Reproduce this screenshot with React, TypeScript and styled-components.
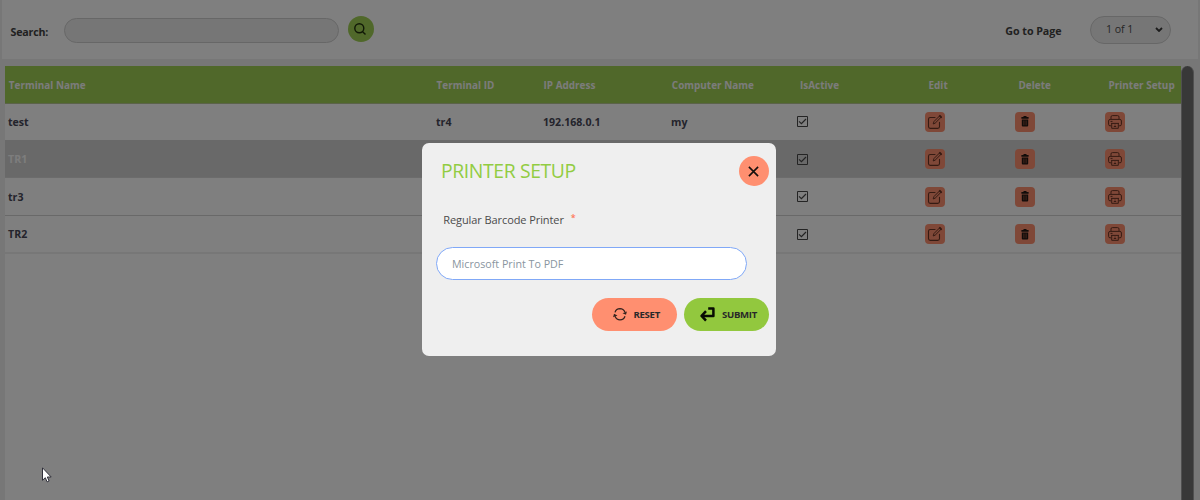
import React from "react";
import styled, { createGlobalStyle } from "styled-components";

const GlobalStyle = createGlobalStyle`
  * { box-sizing: border-box; }
  body {
    margin: 0;
    overflow: hidden;
    font-family: "Open Sans", "Noto Sans", sans-serif;
  }
  button, input, select { font-family: inherit; }
`;

const Page = styled.div`
  height: 500px;
  display: flex;
  flex-direction: column;
  background: #eeeeee;
  overflow: hidden;
`;

const Toolbar = styled.header`
  height: 59px;
  flex: none;
  margin: 0 2px;
  padding: 0 27px 0 9px;
  display: flex;
  align-items: flex-start;
  background: #ffffff;
`;

const ToolLabel = styled.label<{ $top: number; $push?: boolean }>`
  margin-top: ${(p) => p.$top}px;
  margin-left: ${(p) => (p.$push ? "auto" : "-0.5px")};
  font-size: 10.7px;
  line-height: 16px;
  font-weight: 700;
  letter-spacing: ${(p) => (p.$push ? "-0.05px" : "-0.2px")};
  color: #434343;
  white-space: nowrap;
`;

const SearchInput = styled.input`
  width: 275px;
  height: 25px;
  margin: 18px 0 0 15.7px;
  padding: 0 14px;
  border: 1px solid #cfcfcf;
  border-radius: 13px;
  background: #ececec;
  outline: none;
`;

const SearchButton = styled.button`
  width: 26px;
  height: 26px;
  margin: 16px 0 0 9px;
  padding: 0 1px 0 0;
  display: grid;
  place-items: center;
  border: 0;
  border-radius: 50%;
  background: #a0d054;
`;

const PageSelect = styled.div`
  width: 81px;
  height: 28px;
  margin: 16px 0 0 28.5px;
  padding: 0 7px 2px 15px;
  display: flex;
  align-items: center;
  justify-content: space-between;
  border: 1px solid #cfcfcf;
  border-radius: 14px;
  background: #ececec;
  color: #4c4c4c;
  font-size: 10.6px;
  letter-spacing: -0.05px;
`;

const Content = styled.main`
  flex: 1;
  display: flex;
  margin: 7px 6px 0 5px;
`;

const Table = styled.div`
  width: 1176px;
  background: #ffffff;
`;

const Row = styled.div<{ $kind?: "head" | "active" | "last" }>`
  height: ${(p) => (p.$kind === "head" ? 37.5 : p.$kind === "last" ? 38.5 : 37.45)}px;
  display: grid;
  grid-template-columns: 428px 107px 128px 129px 128px 90px 90px 76px;
  align-items: center;
  border-bottom: ${(p) => (p.$kind === "last" ? 2 : 1)}px solid
    ${(p) => (p.$kind === "head" ? "#b6c792" : p.$kind === "active" ? "#d8d8d8" : p.$kind === "last" ? "#eeeeee" : "#d2d2d2")};
  background: ${(p) => (p.$kind === "head" ? "#a0d054" : p.$kind === "active" ? "#d2d2d2" : "#ffffff")};
  color: ${(p) => (p.$kind === "head" ? "#f8f8f8" : p.$kind === "active" ? "#fbfbfb" : "#484858")};
`;

const HeadCell = styled.div<{ $indent?: number }>`
  padding: 1px 0 0 ${(p) => p.$indent ?? 3.8}px;
  font-size: 9.9px;
  font-weight: 700;
  letter-spacing: 0.04px;
  white-space: nowrap;
`;

const Cell = styled.div<{ $indent?: number }>`
  padding-left: ${(p) => p.$indent ?? 3}px;
  font-size: 10.6px;
  font-weight: 700;
  white-space: nowrap;
  display: flex;
`;

const RowButton = styled.button`
  width: 20px;
  height: 20px;
  padding: 0;
  display: grid;
  place-items: center;
  border: 0;
  border-radius: 4px;
  background: #ff9070;
`;

const Scrollbar = styled.div`
  width: 13px;
  border-radius: 7px 7px 0 0;
  background: #707070;
  border: solid #a0a0a0;
  border-width: 0 1px;
`;

const Backdrop = styled.div`
  position: absolute;
  inset: 0 0 auto 0;
  height: 500px;
  padding-top: 143px;
  padding-right: 2px;
  display: flex;
  justify-content: center;
  align-items: flex-start;
  background: rgba(0, 0, 0, 0.5);
`;

const Dialog = styled.section`
  width: 354px;
  height: 213px;
  padding: 13px 7px 25px 14px;
  display: flex;
  flex-direction: column;
  border-radius: 7px;
  background: #efefef;
`;

const DialogHead = styled.div`
  display: flex;
  justify-content: space-between;
  padding-left: 5px;
  height: 30px;
`;

const Title = styled.h1`
  margin: 0;
  font-size: 19.4px;
  line-height: 29px;
  font-weight: 400;
  letter-spacing: -0.4px;
  color: #92cc42;
`;

const CloseButton = styled.button`
  width: 30px;
  height: 30px;
  padding: 0 1px 0 0;
  display: grid;
  place-items: center;
  border: 0;
  border-radius: 50%;
  background: #ff8f70;
`;

const FieldLabel = styled.label`
  margin: 26px 0 0 7.2px;
  font-size: 11px;
  line-height: 16px;
  letter-spacing: -0.08px;
  color: #4b4b4b;
`;

const Required = styled.span`
  margin-left: 4px;
  font-size: 9px;
  font-weight: 600;
  line-height: 1;
  vertical-align: 3px;
  color: #ff7657;
`;

const PrinterInput = styled.input`
  width: 311px;
  height: 33px;
  margin-top: 19px;
  padding: 0 15px;
  border: 1px solid #80a8f7;
  border-radius: 17px;
  background: #ffffff;
  color: #8995a0;
  font-size: 10.7px;
  outline: none;
`;

const Actions = styled.div`
  margin-top: 18px;
  display: flex;
  justify-content: flex-end;
  gap: 7px;
`;

const ActionButton = styled.button<{ $color: string; $gap: number; $left: number }>`
  width: 85px;
  height: 33px;
  padding: 0 0 1px ${(p) => p.$left}px;
  display: flex;
  align-items: center;
  gap: ${(p) => p.$gap}px;
  border: 0;
  border-radius: 17px;
  background: ${(p) => p.$color};
  color: #292929;
  font-size: 9.6px;
  font-weight: 700;
  letter-spacing: -0.3px;
`;

const Cursor = styled.svg`
  position: absolute;
  left: 42px;
  top: 467px;
`;

const SearchIcon = () => (
  <svg width="12" height="12" viewBox="0 0 12 12" fill="none" stroke="#20300c" strokeWidth="1.4">
    <circle cx="5.3" cy="5.3" r="4.5" />
    <path d="M8.4 8.4 11.5 11.5" />
  </svg>
);

const CheckIcon = () => (
  <svg width="11" height="11" viewBox="0 0 11 11" fill="none" stroke="#484848">
    <path d="M.5.5h10v10H.5z" />
    <path d="M2 5.4 4.4 7.7 9 3" strokeWidth="1.2" />
  </svg>
);

const EditIcon = () => (
  <svg width="16" height="16" viewBox="0 0 16 16" fill="none" stroke="#6a3626" strokeLinejoin="round" strokeLinecap="round">
    <path d="M8 3.5H3.3Q1.5 3.5 1.5 5.3v7.3q0 1.8 1.8 1.8h7.4q1.8 0 1.8-1.8V8.2" strokeWidth="1.1" />
    <path d="m6.3 9.6.7-2.1 5.6-5.6 1.4 1.4-5.6 5.6z" strokeWidth="1" />
    <path d="m12.9 1.9 1.2 1.2" strokeWidth="2" />
  </svg>
);

const TrashIcon = () => (
  <svg width="8" height="11" viewBox="0 0 8 11">
    <path d="M2.5 0h3v1H7.6v1.8H.4V1h2.1zM.8 3.4h6.4V9.6q0 1-1 1H1.8q-1 0-1-1z" fill="#221814" />
    <path d="M2.9 4.5v4.8M5.1 4.5v4.8" stroke="#a85c45" strokeWidth=".8" />
  </svg>
);

const PrinterIcon = () => (
  <svg width="14" height="14" viewBox="0 0 14 14" fill="none" stroke="#6a3626" strokeLinejoin="round">
    <path d="M3 4.4V2q0-1.4 1.4-1.4h5.2Q11 .6 11 2v2.4M3.2 10.8H2q-1.4 0-1.4-1.5V6q0-1.6 1.5-1.6h9.8q1.5 0 1.5 1.6v3.3q0 1.5-1.4 1.5h-1.2M3 8.4h8M3.7 8.4v4.9h6.6V8.4" />
    <path d="M2.5 6.4h2M5.8 11.5h2.4M7 9.6v1" />
  </svg>
);

const CloseIcon = () => (
  <svg width="11" height="11" viewBox="0 0 11 11" stroke="#17100d" strokeWidth="1.6">
    <path d="m.9.9 9.2 9.2M10.1.9.9 10.1" />
  </svg>
);

const ResetIcon = () => (
  <svg width="14" height="13" viewBox="0 0 14 13" fill="none" stroke="#35231e" strokeWidth="1.3">
    <path d="M2 4.4Q3.2.8 7 .7q3.4 0 5 3.6M12 8.2Q10.8 11.8 7 11.9q-3.4 0-5-3.6" />
    <path d="m13.9 3.4-.9 3.4-3.5-1.6zM.1 9.2 1 5.8l3.5 1.6z" fill="#35231e" stroke="none" />
  </svg>
);

const SubmitIcon = () => (
  <svg width="15" height="15" viewBox="0 0 15 15" fill="none" stroke="#080c03" strokeWidth="2.5">
    <path d="M8.2 1.6H13.4v7.3H2.5" strokeLinejoin="round" />
    <path d="M6 4.2 1.6 8.9 6 13.6" strokeLinejoin="round" />
  </svg>
);

const columns = [
  { name: "Terminal Name" },
  { name: "Terminal ID", indent: 3.5 },
  { name: "IP Address", indent: 3.5 },
  { name: "Computer Name" },
  { name: "IsActive", indent: 3 },
  { name: "Edit", indent: 3.5 },
  { name: "Delete", indent: 3.5 },
  { name: "Printer Setup", indent: 3.5 },
];

const terminals = [
  { name: "test", id: "tr4", ip: "192.168.0.1", computer: "my" },
  { name: "TR1", id: "", ip: "", computer: "", kind: "active" as const },
  { name: "tr3", id: "", ip: "", computer: "" },
  { name: "TR2", id: "", ip: "", computer: "", kind: "last" as const },
];

export default function App() {
  return (
    <>
      <GlobalStyle />
      <Page>
        <Toolbar>
          <ToolLabel $top={24}>Search:</ToolLabel>
          <SearchInput aria-label="Search" />
          <SearchButton aria-label="Search"><SearchIcon /></SearchButton>
          <ToolLabel $top={23} $push>Go to Page</ToolLabel>
          <PageSelect>
            1 of 1
            <svg width="8" height="6" viewBox="0 0 8 6" fill="none" stroke="#383838" strokeWidth="1.8">
              <path d="m1 2 3 3 3-3" />
            </svg>
          </PageSelect>
        </Toolbar>
        <Content>
          <Table>
            <Row $kind="head">
              {columns.map((c) => (
                <HeadCell key={c.name} $indent={c.indent}>{c.name}</HeadCell>
              ))}
            </Row>
            {terminals.map((t) => (
              <Row key={t.name} $kind={t.kind}>
                <Cell>{t.name}</Cell>
                <Cell>{t.id}</Cell>
                <Cell>{t.ip}</Cell>
                <Cell>{t.computer}</Cell>
                <Cell $indent={0.4}><CheckIcon /></Cell>
                <Cell $indent={0}><RowButton aria-label="Edit"><EditIcon /></RowButton></Cell>
                <Cell $indent={0}><RowButton aria-label="Delete"><TrashIcon /></RowButton></Cell>
                <Cell $indent={0}><RowButton aria-label="Printer setup"><PrinterIcon /></RowButton></Cell>
              </Row>
            ))}
          </Table>
          <Scrollbar />
        </Content>
      </Page>
      <Backdrop>
        <Dialog>
          <DialogHead>
            <Title>PRINTER SETUP</Title>
            <CloseButton aria-label="Close"><CloseIcon /></CloseButton>
          </DialogHead>
          <FieldLabel>
            Regular Barcode Printer <Required>*</Required>
          </FieldLabel>
          <PrinterInput defaultValue="Microsoft Print To PDF" />
          <Actions>
            <ActionButton $color="#ff8f70" $gap={7} $left={20.5}><ResetIcon />RESET</ActionButton>
            <ActionButton $color="#92c83e" $gap={7} $left={16}><SubmitIcon />SUBMIT</ActionButton>
          </Actions>
        </Dialog>
      </Backdrop>
      <Cursor width="10" height="16" viewBox="0 0 10 16">
        <path d="M.5.8v12.5l2.8-2.6 1.8 4.2 2-.9-1.8-4h3.9z" fill="#fff" stroke="#30303a" />
      </Cursor>
    </>
  );
}
